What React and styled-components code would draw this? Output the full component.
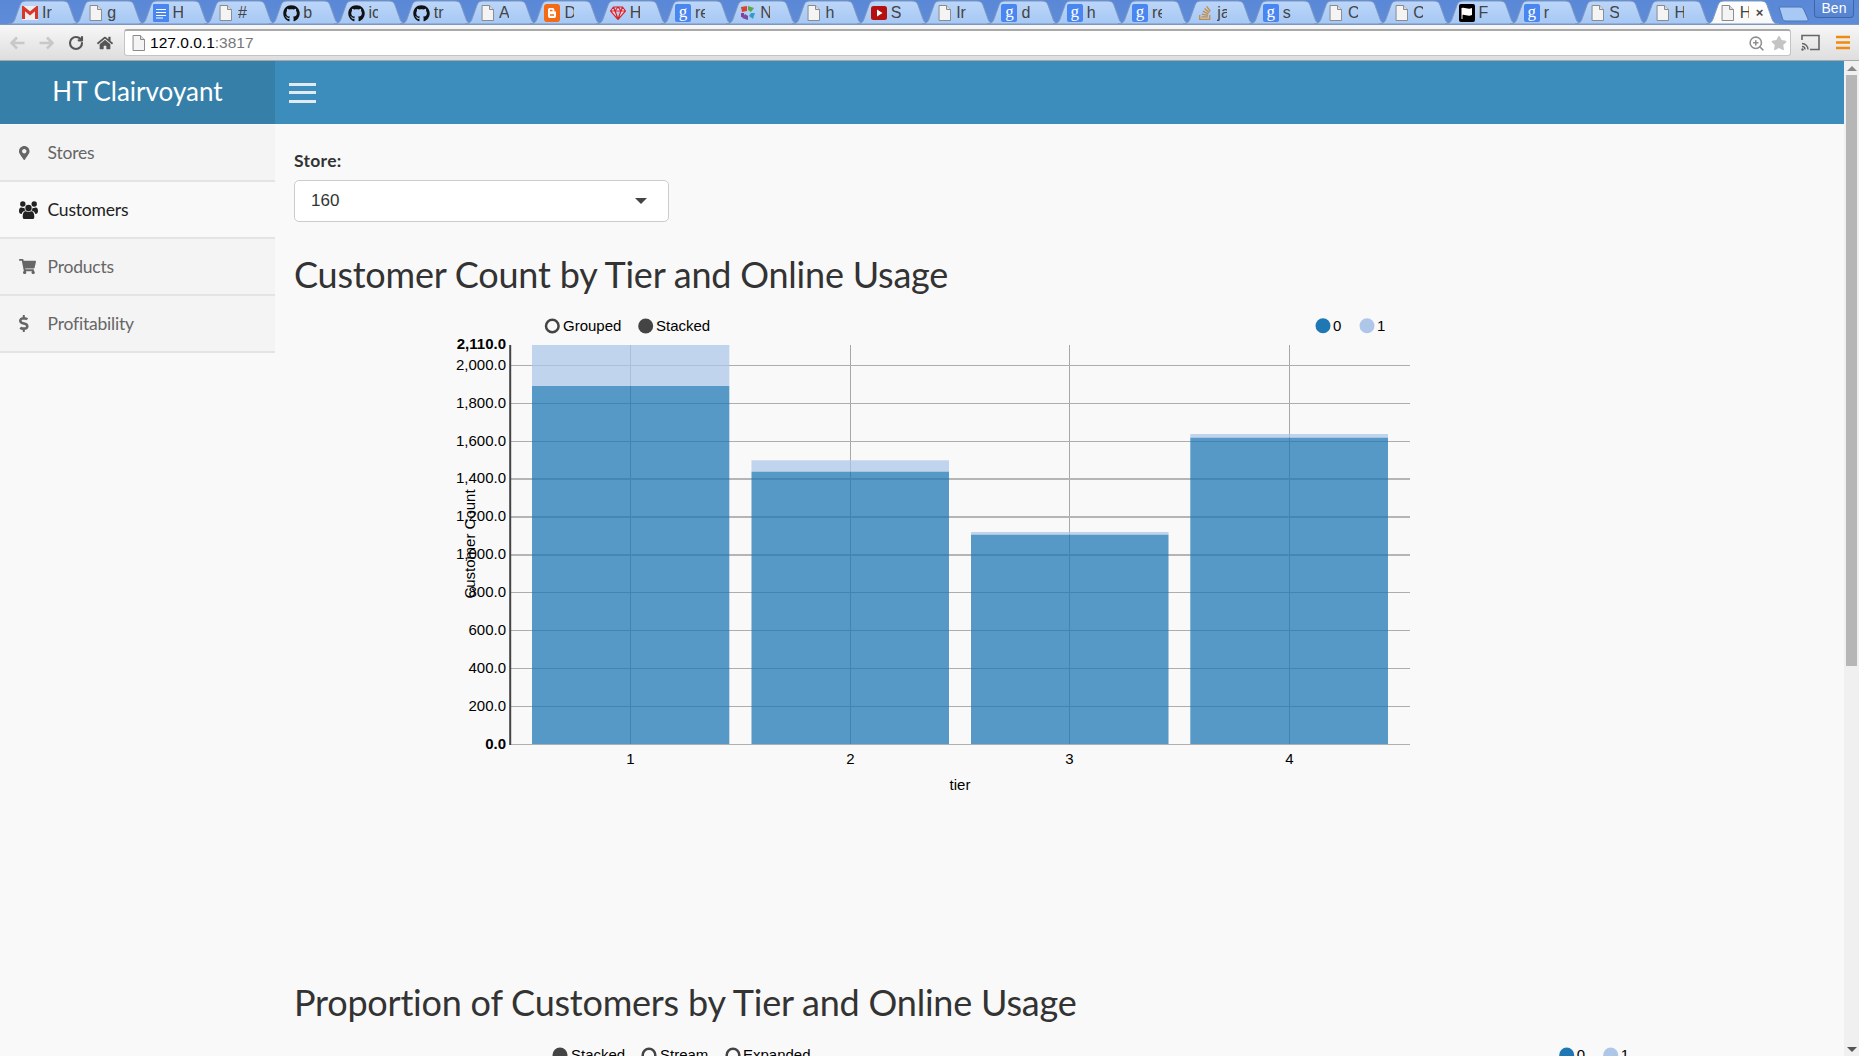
import React from "react";
import styled, { createGlobalStyle } from "styled-components";
import { FaGithub, FaHome, FaStackOverflow, FaStar, FaMapMarkerAlt, FaShoppingCart, FaDollarSign } from "react-icons/fa";
import { ZoomIn, RotateCw } from "lucide-react";

const Global = createGlobalStyle`
  html, body { margin: 0; padding: 0; height: 100%; overflow: hidden; background: #f9f9f9; }
  * { box-sizing: border-box; }
`;

const SANS = `"Lato", "Noto Sans", sans-serif`;
const ARIAL = `"Liberation Sans", Arial, sans-serif`;

const Shell = styled.div`
  height: 100vh; display: flex; flex-direction: column; overflow: hidden;
`;
const TabStrip = styled.div`
  height: 25px; flex: none; display: flex; align-items: flex-start;
  background: linear-gradient(#5a88d6, #5f8cd8); padding-left: 8px; overflow: hidden;
  border-bottom: 1px solid #7d97bf;
`;
const TabItem = styled.div`
  position: relative; flex: none; width: 65.3px; height: 25px;
  display: flex; align-items: center; padding: 1px 0 0 14px; gap: 4px;
  z-index: ${(p) => (p.$active ? 5 : 1)};
`;
const TabShape = styled.svg`
  position: absolute; left: 0; top: 0; width: 73px; height: 25px; z-index: -1;
`;
const TabIconBox = styled.span`
  width: 16px; flex: none; display: flex; justify-content: center; align-items: center;
`;
const TabLabel = styled.span`
  font: 16px/20px ${ARIAL}; color: #444; width: ${(p) => (p.$active ? 9 : 10)}px;
  overflow: hidden; white-space: nowrap; flex: none;
`;
const GBadge = styled.span`
  width: 16px; height: 18px; flex: none; border-radius: 2px; background: #4a86f0; color: #fff;
  font: 17px/15px "Liberation Serif", serif; text-align: center;
`;
const Close = styled.span`
  font: bold 13px/14px ${ARIAL}; color: #444; margin-left: 3px;
`;
const NewTab = styled.svg`
  flex: none; width: 32px; height: 16px; margin: 6px 0 0 7px; position: relative; z-index: 3;
`;
const Avatar = styled.div`
  margin: 0 5px 0 auto; width: 40px; height: 18px; flex: none; border: 1px solid #3b68ad; border-top: 0;
  border-radius: 0 0 4px 4px; background: linear-gradient(#5f8cd8, #5583d0);
  font: 14px/17px ${ARIAL}; color: #fff; text-align: center;
`;
const Toolbar = styled.div`
  height: 36px; flex: none; display: flex; align-items: center; padding-left: 3px;
  background: linear-gradient(#f7f7f7, #dedede); border-bottom: 1px solid #a8a8a8;
`;
const ToolBtn = styled.div`
  width: ${(p) => p.$w || 29}px; flex: none; display: flex; align-items: center; justify-content: center;
  color: ${(p) => p.$color || "#555"};
`;
const AddressBar = styled.div`
  flex: 1; margin: 0 3px 0 5px; height: 27px; display: flex; align-items: center;
  background: #fff; border: 1px solid #c4c4c4; border-top: 2px solid #a9a9a9; border-radius: 3px;
  padding: 0 3px 0 7px; gap: 5px;
`;
const Url = styled.span`
  font: 15.500px/20px ${ARIAL}; color: #000;
  & > em { font-style: normal; color: #777; }
`;
const AddressIcons = styled.div`
  margin-left: auto; display: flex; align-items: center; gap: 6px; color: #c4c4c4;
`;
const Body = styled.div`
  flex: 1; min-height: 0; display: flex;
`;
const Page = styled.div`
  flex: 1; min-width: 0; display: flex; flex-direction: column;
`;
const Header = styled.header`
  height: 63px; flex: none; display: flex; background: #3c8dbc;
`;
const Logo = styled.div`
  width: 275px; flex: none; background: #367fa9; color: #fff; font: 26px/61px ${SANS};
  text-align: center;
`;
const Burger = styled.div`
  margin-left: 14px; width: 27px; display: flex; flex-direction: column; justify-content: center; gap: 5.5px;
  & > span { height: 3px; background: #dfeaf2; }
`;
const Row = styled.div`
  flex: 1; min-height: 0; display: flex;
`;
const Sidebar = styled.nav`
  width: 275px; flex: none; padding-top: 1px; background: #f9f9f9;
`;
const NavItem = styled.div`
  height: 57px; display: flex; align-items: center; padding-left: 19px;
  background: ${(p) => (p.$active ? "#f9f9f9" : "#f4f4f4")};
  color: ${(p) => (p.$active ? "#222" : "#666")};
  border-bottom: 2px solid #e4e4e4;
  font: 17.500px/22px ${SANS}; letter-spacing: -0.2px;
`;
const NavIcon = styled.span`
  width: 28.500px; flex: none; display: flex; align-items: center;
`;
const Main = styled.main`
  flex: 1; min-width: 0; padding: 26px 19px 0; overflow: hidden;
`;
const Label = styled.div`
  font: bold 17.500px/22px ${SANS}; letter-spacing: .3px; color: #333; margin-bottom: 8px;
`;
const Select = styled.div`
  width: 375px; height: 42px; display: flex; align-items: center; justify-content: space-between;
  padding: 0 21px 0 16px; background: #fff; border: 1px solid #ccc; border-radius: 5px;
  font: 17px/22px ${ARIAL}; color: #333;
  &::after { content: ""; border-style: solid; border-width: 6px 6px 0; border-color: #444 transparent transparent; }
`;
const Title = styled.h2`
  margin: 29px 0 13px; font: 400 36px/46px ${SANS}; letter-spacing: -0.22px; color: #333;
`;
const Chart = styled.svg`
  display: block; width: 1530px; height: ${(p) => p.$h}px;
  & text { font-family: ${ARIAL}; font-size: 15px; fill: #000; }
`;
const Scrollbar = styled.div`
  width: 15px; flex: none; background: #f0f0f0; display: flex; flex-direction: column; align-items: center;
  padding: 5px 0 4px;
`;
const ScrollArrow = styled.div`
  flex: none; border-style: solid; border-color: transparent;
  border-width: ${(p) => (p.$up ? "0 5px 5px" : "5px 5px 0")};
  ${(p) => (p.$up ? "border-bottom-color:#888;" : "border-top-color:#555;")}
`;
const Thumb = styled.div`
  width: 11px; height: 591px; margin-top: 4px; background: #b6b6b6; flex: none;
`;
const ScrollGap = styled.div`
  flex: 1;
`;

const FileIcon = ({ size = 16 }) => (
  <svg width={size * 0.82} height={size} viewBox="0 0 13 16" style={{ flex: "none" }}>
    <path d="M1 .5h7.5L12.5 4.5V15.5H1z" fill="#f4f4f4" stroke="#8a8a8a" />
    <path d="M8.500.5V4.500H12.500" fill="#ddd" stroke="#8a8a8a" />
  </svg>
);
const Gmail = () => (
  <svg width="16" height="14" viewBox="0 0 16 14" style={{ flex: "none" }}>
    <rect width="16" height="14" fill="#eee" />
    <path d="M1.500 13V2L8 7.500 14.500 2V13" fill="none" stroke="#d8362a" strokeWidth="3" />
  </svg>
);
const Docs = () => (
  <svg width="16" height="18" viewBox="0 0 16 18" style={{ flex: "none" }}>
    <rect width="16" height="18" rx="1" fill="#4a86f0" />
    <path d="M3 5.500h10M3 8.500h10M3 11.500h10M3 14h7" stroke="#fff" strokeWidth="1.2" />
  </svg>
);
const Blogger = () => (
  <svg width="16" height="18" viewBox="0 0 16 18" style={{ flex: "none" }}>
    <rect width="16" height="18" rx="3" fill="#f56a12" />
    <path d="M4 5.500C4 4.500 5 4 6 4H8.500C10 4 10.500 5 10.500 7.500H12V12C12 13.500 11 14 10 14H6C5 14 4 13.500 4 12Z" fill="#fff" />
    <path d="M6 6.500H8.500M6 11H10" stroke="#f56a12" strokeWidth="1.3" />
  </svg>
);
const Ruby = () => (
  <svg width="16" height="14" viewBox="0 0 16 14" style={{ flex: "none" }}>
    <path d="M3.500 1H12.500L15.500 5 8 13.500.5 5Z M.5 5H15.500 M5 5L8 13 11 5 M3.500 1L5 5 8 1 11 5 12.500 1" fill="#fde" stroke="#d8232a" strokeWidth="1.2" />
  </svg>
);
const Pinwheel = () => (
  <svg width="16" height="16" viewBox="0 0 16 16" style={{ flex: "none" }}>
    <path d="M1 2L7 1 7 6 2 7Z" fill="#d8432a" />
    <path d="M8 1L14 3 11 7 8 5Z" fill="#5aa84a" />
    <path d="M15 8L13 14 9 11 11 8Z" fill="#2f9fc8" />
    <path d="M8 15L2 13 5 9 8 11Z" fill="#7a4aa8" />
    <path d="M1 8L4 8 4 12 1 12Z" fill="#8a3fa0" />
  </svg>
);
const YouTube = () => (
  <svg width="16" height="14" viewBox="0 0 16 14" style={{ flex: "none" }}>
    <rect width="16" height="14" rx="2.500" fill="#b51010" />
    <path d="M6 3.500L11.500 7 6 10.500Z" fill="#fff" />
  </svg>
);
const Flag = () => (
  <svg width="16" height="18" viewBox="0 0 16 18" style={{ flex: "none" }}>
    <rect width="16" height="18" rx="2" fill="#000" />
    <path d="M3 4C6 3 9 6 13 4V11C9 13 6 10 3 11Z" fill="#fff" />
    <path d="M3 4V15" stroke="#fff" />
  </svg>
);
const Git = () => <FaGithub size={17} color="#111" style={{ flex: "none" }} />;
const G = () => <GBadge>g</GBadge>;
const So = () => <FaStackOverflow size={16} color="#c98a3a" style={{ flex: "none" }} />;
const F = () => <FileIcon />;

const Pin = () => <FaMapMarkerAlt size={14} preserveAspectRatio="xMinYMid" />;
const Cart = () => <FaShoppingCart size={17} preserveAspectRatio="xMinYMid" />;
const Dollar = () => <FaDollarSign size={17} preserveAspectRatio="xMinYMid" />;
const Users = () => (
  <svg width="19" height="18" viewBox="0 0 19 18">
    <circle cx="9.500" cy="7" r="3.200" fill="currentColor" />
    <path d="M5 18C4 18 3.700 17 3.700 15.500 3.700 12 5 10 7 10.300 8 11 11 11 12 10.300 14 10 15.300 12 15.300 15.500 15.300 17 15 18 14 18Z" fill="currentColor" />
    <circle cx="3.800" cy="3" r="2.700" fill="currentColor" />
    <circle cx="15.200" cy="3" r="2.700" fill="currentColor" />
    <path d="M0 10C0 7.500 1 6.300 2.500 6.600 3.500 7 4.500 7 5.400 6.700 5.500 8 6 9 6.500 9.500 4.500 9.800 3 11.200 2.700 13 1 13 0 12 0 10Z" fill="currentColor" />
    <path d="M19 10C19 7.500 18 6.300 16.500 6.600 15.500 7 14.500 7 13.600 6.700 13.500 8 13 9 12.500 9.500 14.500 9.800 16 11.200 16.300 13 18 13 19 12 19 10Z" fill="currentColor" />
  </svg>
);

const tabs = [
  [Gmail, "Ir"], [F, "g"], [Docs, "H"], [F, "#"], [Git, "b"], [Git, "ic"], [Git, "tr"], [F, "A"], [Blogger, "D"],
  [Ruby, "H"], [G, "re"], [Pinwheel, "N"], [F, "h"], [YouTube, "S"], [F, "Ir"], [G, "d"], [G, "h"], [G, "re"],
  [So, "ja"], [G, "s"], [F, "C"], [F, "C"], [Flag, "F"], [G, "r"], [F, "S"], [F, "H"],
];

const shapeD = "M0 24C4 24 6 22 7 19L12 5C13 2 15 1 18 1H55C58 1 60 2 61 5L66 19C67 22 69 24 73 24Z";

const Tab = ({ Icon, text, active, index }) => (
  <TabItem $active={active}>
    <TabShape viewBox="0 0 73 25">
      <defs>
        <linearGradient id={`tg${index}`} x1="0" y1="0" x2="0" y2="1">
          <stop offset="0" stopColor={active ? "#ffffff" : "#bcd6f8"} />
          <stop offset="1" stopColor={active ? "#f8f8f8" : "#a6c8f5"} />
        </linearGradient>
      </defs>
      <path d={shapeD} fill={`url(#tg${index})`} stroke={active ? "#7f9ac4" : "#7a97c4"} />
    </TabShape>
    <TabIconBox><Icon /></TabIconBox>
    <TabLabel $active={active}>{text}</TabLabel>
    {active && <Close>×</Close>}
  </TabItem>
);

const Y = [[2000, 365.5, 1], [1800, 403.5, 1], [1600, 441.5, 1], [1400, 479, 2], [1200, 517, 2], [1000, 555, 2], [800, 592.5, 1], [600, 630.5, 1], [400, 668.5, 1], [200, 706.5, 1]];
const fmt = (v) => v.toLocaleString("en-US", { minimumFractionDigits: 1 });
const bars = [
  { x: 532, w: 197.3, cx: 630.5, t: 345, m: 386, name: "1" },
  { x: 751.5, w: 197.5, cx: 850.5, t: 460.3, m: 471.7, name: "2" },
  { x: 971, w: 197.5, cx: 1069.5, t: 532, m: 534.7, name: "3" },
  { x: 1190.3, w: 197.7, cx: 1289.5, t: 434, m: 437.7, name: "4" },
];

const LegendDot = ({ x, y, on }) =>
  on ? <circle cx={x} cy={y} r="7.500" fill="#444" /> : <circle cx={x} cy={y} r="6.300" fill="none" stroke="#444" strokeWidth="2.500" />;

const SeriesLegend = ({ y, x0, x1 }) => (
  <g>
    <circle cx={x0} cy={y} r="7.500" fill="#1f77b4" />
    <text x={x0 + 10} y={y} dy=".35em">0</text>
    <circle cx={x1} cy={y} r="7.500" fill="#aec7e8" />
    <text x={x1 + 10} y={y} dy=".35em">1</text>
  </g>
);

const BarChart = () => (
  <Chart $h={640} viewBox="294 310 1530 640">
    <LegendDot x={552.3} y={326} />
    <text x={563} y={326} dy=".35em">Grouped</text>
    <LegendDot x={645.7} y={326} on />
    <text x={656} y={326} dy=".35em">Stacked</text>
    <SeriesLegend y={325.7} x0={1323} x1={1367} />
    {bars.map((b) => (
      <line key={b.name} x1={b.cx} x2={b.cx} y1={345} y2={744} stroke="#a8a8a8" strokeWidth="1" />
    ))}
    {Y.map(([v, y, w]) => (
      <line key={v} x1={511} x2={1410} y1={y} y2={y} stroke={w > 1.5 ? "#b5b5b5" : "#adadad"} strokeWidth={w} />
    ))}
    <line x1={511} x2={1410} y1={744.5} y2={744.5} stroke="#b0b0b0" strokeWidth="1" />
    {bars.map((b) => (
      <g key={b.name}>
        <rect x={b.x} y={b.t} width={b.w} height={b.m - b.t} fill="#aec7e8" fillOpacity=".75" />
        <rect x={b.x} y={b.m} width={b.w} height={744 - b.m} fill="#1f77b4" fillOpacity=".75" />
      </g>
    ))}
    <line x1={510.2} x2={510.2} y1={345} y2={745} stroke="#444" strokeWidth="2" />
    <text x={506} y={343.5} dy=".35em" textAnchor="end" fontWeight="bold">2,110.0</text>
    {Y.map(([v, y]) => (
      <text key={v} x={506} y={y - 1} dy=".35em" textAnchor="end">{fmt(v)}</text>
    ))}
    <text x={506} y={744} dy=".35em" textAnchor="end" fontWeight="bold">0.0</text>
    {bars.map((b) => (
      <text key={b.name} x={b.cx} y={759} dy=".35em" textAnchor="middle">{b.name}</text>
    ))}
    <text x={960} y={785} dy=".35em" textAnchor="middle">tier</text>
    <text transform="translate(470 544) rotate(-90)" dy=".35em" textAnchor="middle">Customer Count</text>
  </Chart>
);

const AreaChart = () => (
  <Chart $h={40} viewBox="294 1038 1530 40">
    <LegendDot x={560} y={1055} on />
    <text x={571} y={1055} dy=".35em">Stacked</text>
    <LegendDot x={649} y={1055} />
    <text x={660} y={1055} dy=".35em">Stream</text>
    <LegendDot x={733} y={1055} />
    <text x={743} y={1055} dy=".35em">Expanded</text>
    <SeriesLegend y={1055} x0={1566.7} x1={1610.7} />
  </Chart>
);

const navs = [
  [Pin, "Stores"],
  [Users, "Customers", true],
  [Cart, "Products"],
  [Dollar, "Profitability"],
];

export default function App() {
  return (
    <Shell>
      <Global />
      <TabStrip>
        {tabs.map(([I, t], i) => (
          <Tab key={i} Icon={I} text={t} index={i} />
        ))}
        <Tab Icon={F} text="H" active index={99} />
        <NewTab viewBox="0 0 32 16">
          <path d="M1 1H22C24 1 25 2 26 4L30 13C30.5 14.5 30 15 28 15H8C6 15 5 14 4.500 12.500Z" fill="#a9c9f5" stroke="#4a74b8" />
        </NewTab>
        <Avatar>Ben</Avatar>
      </TabStrip>
      <Toolbar>
        <ToolBtn $color="#c8c8c8">
          <svg width="15" height="14" viewBox="0 0 15 14"><path d="M7 1.500L1.500 7 7 12.500M2 7H14.500" fill="none" stroke="currentColor" strokeWidth="2.600" /></svg>
        </ToolBtn>
        <ToolBtn $color="#c8c8c8">
          <svg width="15" height="14" viewBox="0 0 15 14"><path d="M8 1.500L13.500 7 8 12.500M13 7H.5" fill="none" stroke="currentColor" strokeWidth="2.600" /></svg>
        </ToolBtn>
        <ToolBtn><RotateCw size={16} strokeWidth={3.2} /></ToolBtn>
        <ToolBtn><FaHome size={16} /></ToolBtn>
        <AddressBar>
          <FileIcon size={16} />
          <Url>127.0.0.1<em>:3817</em></Url>
          <AddressIcons>
            <ZoomIn size={17} color="#8f8f8f" strokeWidth={2.2} />
            <FaStar size={16} />
          </AddressIcons>
        </AddressBar>
        <ToolBtn $w={33}>
          <svg width="19" height="17" viewBox="0 0 19 17">
            <path d="M1 6V1.500H18V15.500H9" fill="none" stroke="#666" strokeWidth="1.600" />
            <path d="M1 9.500A6 6 0 0 1 7 15.500M1 12.500A3 3 0 0 1 4 15.500" fill="none" stroke="#666" strokeWidth="1.400" />
            <circle cx="1.500" cy="15.500" r="1.200" fill="#666" />
          </svg>
        </ToolBtn>
        <ToolBtn $w={32}>
          <svg width="14" height="15" viewBox="0 0 14 15"><path d="M0 2H14M0 7.500H14M0 13H14" stroke="#f08a0c" strokeWidth="2.600" /></svg>
        </ToolBtn>
      </Toolbar>
      <Body>
        <Page>
          <Header>
            <Logo>HT Clairvoyant</Logo>
            <Burger><span /><span /><span /></Burger>
          </Header>
          <Row>
            <Sidebar>
              {navs.map(([I, t, a]) => (
                <NavItem key={t} $active={a}>
                  <NavIcon><I /></NavIcon>
                  {t}
                </NavItem>
              ))}
            </Sidebar>
            <Main>
              <Label>Store:</Label>
              <Select>160</Select>
              <Title>Customer Count by Tier and Online Usage</Title>
              <BarChart />
              <Title>Proportion of Customers by Tier and Online Usage</Title>
              <AreaChart />
            </Main>
          </Row>
        </Page>
        <Scrollbar>
          <ScrollArrow $up />
          <Thumb />
          <ScrollGap />
          <ScrollArrow />
        </Scrollbar>
      </Body>
    </Shell>
  );
}
